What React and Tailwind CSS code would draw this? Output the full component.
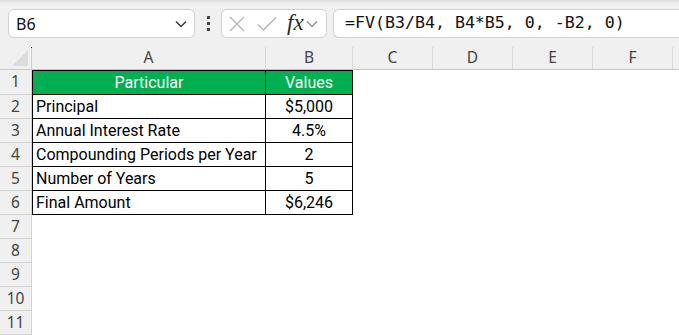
import React from "react";

const rows = [
  ["Principal", "$5,000"],
  ["Annual Interest Rate", "4.5%"],
  ["Compounding Periods per Year", "2"],
  ["Number of Years", "5"],
  ["Final Amount", "$6,246"],
];

function RowHeader({ n, h }) {
  return (
    <div
      className={`${h} w-[32px] shrink-0 border-r border-b border-[#d4d4d4] bg-[#f0f0f0] flex items-center justify-center text-[15.5px] text-[#444]`}
      style={{ fontFamily: '"Noto Sans", "Liberation Sans", sans-serif' }}
    >
      {n}
    </div>
  );
}

export default function App() {
  const cellFont = { fontFamily: 'Roboto, "Liberation Sans", sans-serif' };
  return (
    <div className="w-[679px] h-[335px] overflow-hidden bg-white select-none">
      {/* toolbar */}
      <div className="relative h-[47px] bg-[#f0f0f0] flex items-start pt-[9px] pl-[8px]">
        <div className="absolute left-0 right-0 top-0 h-[4px] bg-gradient-to-b from-[#dcdcdc] to-[#f0f0f0]" />
        <div className="relative w-[187px] h-[29px] bg-white border border-[#d2d2d2] rounded-[6px] flex items-center pl-[7px] pr-[6px]">
          <span className="text-[16px] text-[#111] flex-1" style={{ fontFamily: '"Noto Sans", "Liberation Sans", sans-serif' }}>B6</span>
          <svg width="12" height="8" viewBox="0 0 12 8" className="mr-[1px]">
            <path d="M1 1.5 L6 6.5 L11 1.5" fill="none" stroke="#333" strokeWidth="1.4" />
          </svg>
        </div>
        <div className="w-[26px] h-[29px] flex flex-col items-center justify-center gap-[3px]">
          <div className="w-[3px] h-[3px] bg-[#444]" />
          <div className="w-[3px] h-[3px] bg-[#444]" />
          <div className="w-[3px] h-[3px] bg-[#444]" />
        </div>
        <div className="w-[106px] h-[29px] bg-white border border-[#d2d2d2] rounded-[6px] flex items-center pl-[7px]">
          <svg width="16" height="16" viewBox="0 0 16 16">
            <path d="M1 1 L15 15 M15 1 L1 15" stroke="#b4b4b4" strokeWidth="1.3" fill="none" />
          </svg>
          <svg width="20" height="16" viewBox="0 0 20 16" className="ml-[12px]">
            <path d="M1 8.5 L6.5 14 L19 1.5" stroke="#b4b4b4" strokeWidth="1.3" fill="none" />
          </svg>
          <span className="ml-[10px] italic text-[23px] leading-none text-[#2a2a2a] -mt-[3px]" style={{ fontFamily: '"Liberation Serif", serif' }}>fx</span>
          <svg width="12" height="8" viewBox="0 0 12 8" className="ml-[2px]">
            <path d="M1 1.5 L6 6.5 L11 1.5" fill="none" stroke="#8a8a8a" strokeWidth="1.2" />
          </svg>
        </div>
        <div className="ml-[6px] flex-1 h-[29px] bg-white border border-r-0 border-[#d2d2d2] rounded-l-[6px] flex items-center pl-[11px]">
          <span className="text-[16.6px] text-[#111] whitespace-pre" style={{ fontFamily: '"DejaVu Sans Mono", "Liberation Mono", monospace' }}>
            =FV(B3/B4, B4*B5, 0, -B2, 0)
          </span>
        </div>
      </div>

      {/* column headers */}
      <div className="flex h-[23px] bg-[#f0f0f0] border-b border-[#c8c8c8] text-[15.5px] text-[#444]" style={{ fontFamily: '"Noto Sans", "Liberation Sans", sans-serif' }}>
        <div className="relative w-[32px] shrink-0 border-r border-[#cfcfcf]">
          <svg width="17" height="17" viewBox="0 0 17 17" className="absolute left-[12px] top-[3px]">
            <path d="M16 0 L16 16 L0 16 Z" fill="#dcdcdc" />
          </svg>
          <div className="absolute right-[-1px] top-0 w-[1px] h-[1px] bg-black" />
        </div>
        <div className="w-[234px] shrink-0 border-r border-[#d9d9d9] flex items-center justify-center">A</div>
        <div className="w-[87px] shrink-0 border-r border-[#d9d9d9] flex items-center justify-center">B</div>
        <div className="w-[80px] shrink-0 border-r border-[#d9d9d9] flex items-center justify-center">C</div>
        <div className="w-[80px] shrink-0 border-r border-[#d9d9d9] flex items-center justify-center">D</div>
        <div className="w-[80px] shrink-0 border-r border-[#d9d9d9] flex items-center justify-center">E</div>
        <div className="w-[80px] shrink-0 border-r border-[#d9d9d9] flex items-center justify-center">F</div>
        <div className="flex-1" />
      </div>

      {/* row 1 */}
      <div className="flex" style={cellFont}>
        <RowHeader n={1} h="h-[25px]" />
        <div className="w-[234px] h-[25px] shrink-0 bg-[#00b050] border border-black text-white text-[16px] flex items-center justify-center">Particular</div>
        <div className="w-[87px] h-[25px] shrink-0 bg-[#00b050] border-y border-r border-black text-white text-[16px] flex items-center justify-center">Values</div>
      </div>

      {rows.map(([a, b], i) => (
        <div key={i} className="flex" style={cellFont}>
          <RowHeader n={i + 2} h="h-[24px]" />
          <div className="w-[234px] h-[24px] shrink-0 border-x border-b border-black text-[16px] text-black flex items-center pl-[3px]">{a}</div>
          <div className="w-[87px] h-[24px] shrink-0 border-r border-b border-black text-[16px] text-black flex items-center justify-center">{b}</div>
        </div>
      ))}

      {[7, 8, 9, 10, 11].map((n) => (
        <div key={n} className="flex">
          <RowHeader n={n} h="h-[24px]" />
        </div>
      ))}
    </div>
  );
}
